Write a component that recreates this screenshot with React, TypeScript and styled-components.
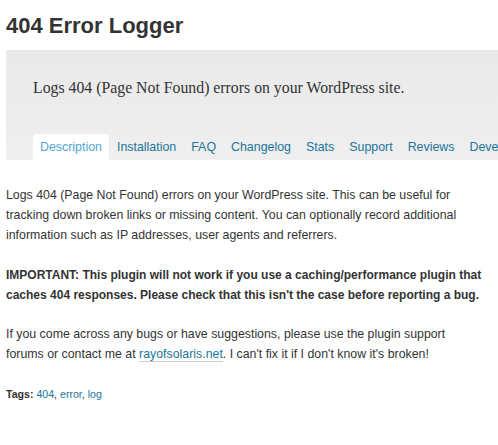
import styled, { createGlobalStyle } from "styled-components";

const GlobalStyle = createGlobalStyle`
  body {
    margin: 0;
    background: #fff;
    font-family: "Liberation Sans", Arial, sans-serif;
    color: #333;
  }
`;

const Page = styled.div`
  width: 498px;
  height: 445px;
  overflow: hidden;
  padding-left: 6px;
  box-sizing: border-box;
`;

const Title = styled.h1`
  margin: 0;
  padding-top: 12px;
  height: 50px;
  box-sizing: border-box;
  font-size: 22px;
  line-height: 28px;
  font-weight: bold;
  color: #333;
`;

const Banner = styled.div`
  width: 600px;
  height: 110px;
  background: linear-gradient(to bottom, #e9e9e9, #efefef);
  display: flex;
  flex-direction: column;
  padding-left: 27px;
  box-sizing: border-box;
`;

const Tagline = styled.p`
  margin: 0;
  padding-top: 28px;
  height: 84px;
  box-sizing: border-box;
  font-family: "Liberation Serif", "DejaVu Serif", serif;
  font-size: 15.8px;
  line-height: 20px;
  color: #333;
`;

const Tabs = styled.ul`
  list-style: none;
  margin: 0;
  padding: 0;
  display: flex;
  gap: 1px;
  height: 26px;
`;

const Tab = styled.li<{ $active?: boolean }>`
  padding: 0 7px;
  font-size: 12.4px;
  line-height: 26px;
  white-space: nowrap;
  border-radius: 3px 3px 0 0;
  color: ${(p) => (p.$active ? "#53a3d2" : "#21759b")};
  background: ${(p) => (p.$active ? "#fff" : "transparent")};
`;

const Content = styled.div`
  padding-top: 25px;
  font-size: 12.35px;
  line-height: 20px;
  color: #333;
  width: 480px;
`;

const Para = styled.p`
  margin: 0 0 19.5px;
`;

const Notice = styled(Para)`
  font-size: 12px;
  font-weight: bold;
`;

const Strong = styled.strong`
  font-weight: bold;
`;

const Link = styled.a`
  color: #21759b;
  text-decoration: none;
  border-bottom: 1px solid #ccc;
`;

const Tags = styled.p`
  margin: 0;
  padding-top: 2px;
  font-size: 10.6px;
  line-height: 16px;
`;

const TagLink = styled.a`
  color: #21759b;
  text-decoration: none;
`;

const tabs = ["Description", "Installation", "FAQ", "Changelog", "Stats", "Support", "Reviews", "Developers"];

export default function App() {
  return (
    <Page>
      <GlobalStyle />
      <Title>404 Error Logger</Title>
      <Banner>
        <Tagline>Logs 404 (Page Not Found) errors on your WordPress site.</Tagline>
        <Tabs>
          {tabs.map((t, i) => (
            <Tab key={t} $active={i === 0}>
              {t}
            </Tab>
          ))}
        </Tabs>
      </Banner>
      <Content>
        <Para>
          Logs 404 (Page Not Found) errors on your WordPress site. This can be useful for tracking down broken
          links or missing content. You can optionally record additional information such as IP addresses, user
          agents and referrers.
        </Para>
        <Notice>
          IMPORTANT: This plugin will not work if you use a caching/performance plugin that caches 404 responses.
          Please check that this isn't the case before reporting a bug.
        </Notice>
        <Para>
          If you come across any bugs or have suggestions, please use the plugin support forums or contact me at{" "}
          <Link href="#">rayofsolaris.net</Link>. I can't fix it if I don't know it's broken!
        </Para>
        <Tags>
          <Strong>Tags:</Strong> <TagLink href="#">404</TagLink>, <TagLink href="#">error</TagLink>,{" "}
          <TagLink href="#">log</TagLink>
        </Tags>
      </Content>
    </Page>
  );
}
